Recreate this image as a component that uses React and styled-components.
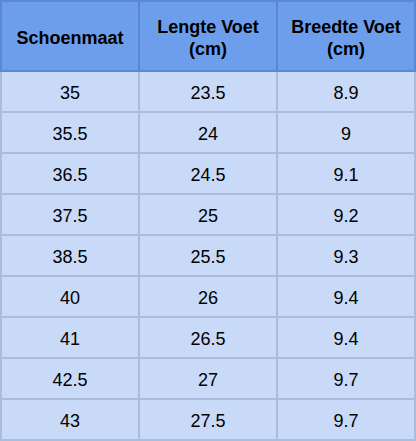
import React from "react";
import styled, { createGlobalStyle } from "styled-components";

const Global = createGlobalStyle`
  html, body { margin: 0; padding: 0; background: #ffffff; }
  body { font-family: "Liberation Sans", Arial, sans-serif; }
`;

const Table = styled.table`
  border-collapse: collapse;
  width: 416px;
  table-layout: fixed;
  font-family: "Liberation Sans", Arial, sans-serif;
  color: #000;
`;

const HeadCell = styled.th`
  width: 33.333%;
  background: #6d9eeb;
  border: 2px solid #5a88d2;
  height: 70px;
  padding: 3px 4px 0;
  box-sizing: border-box;
  font-size: 18px;
  font-weight: bold;
  line-height: 22px;
  text-align: center;
  vertical-align: middle;
`;

const Cell = styled.td`
  background: #c9daf8;
  border: 2px solid #a9bcdc;
  height: 41px;
  padding: 3px 0 0;
  box-sizing: border-box;
  font-size: 18px;
  text-align: center;
  vertical-align: middle;
`;

const rows = [
  ["35", "23.5", "8.9"],
  ["35.5", "24", "9"],
  ["36.5", "24.5", "9.1"],
  ["37.5", "25", "9.2"],
  ["38.5", "25.5", "9.3"],
  ["40", "26", "9.4"],
  ["41", "26.5", "9.4"],
  ["42.5", "27", "9.7"],
  ["43", "27.5", "9.7"],
];

export default function App() {
  return (
    <>
      <Global />
      <Table>
        <thead>
          <tr>
            <HeadCell>Schoenmaat</HeadCell>
            <HeadCell>Lengte Voet<br />(cm)</HeadCell>
            <HeadCell>Breedte Voet<br />(cm)</HeadCell>
          </tr>
        </thead>
        <tbody>
          {rows.map((r, i) => (
            <tr key={i}>
              {r.map((v, j) => (
                <Cell key={j}>{v}</Cell>
              ))}
            </tr>
          ))}
        </tbody>
      </Table>
    </>
  );
}
